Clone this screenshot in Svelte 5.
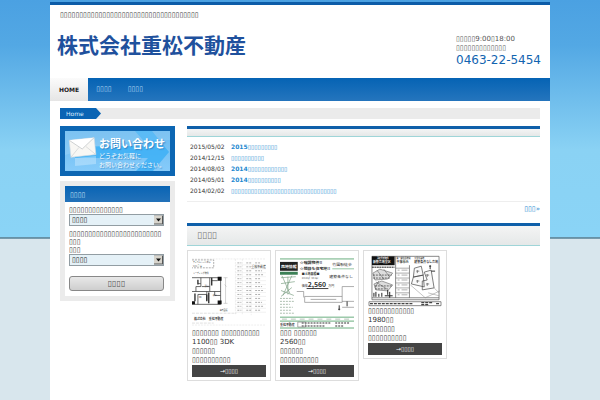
<script>
    const box = (n) => '▯'.repeat(n);

    const nav = [
        { label: 'HOME', active: true },
        { label: box(4) },
        { label: box(4) },
    ];

    const news = [
        { date: '2015/05/02', year: '2015', title: box(9) },
        { date: '2014/12/15', year: '', title: box(10) },
        { date: '2014/08/03', year: '2014', title: box(12) },
        { date: '2014/05/01', year: '2014', title: box(10) },
        { date: '2014/02/02', year: '', title: box(32) },
    ];

    const cards = [
        { art: 'plan', lines: [box(7) + ' ' + box(10), '1100' + box(2) + ' 3DK', box(6), box(10)] },
        { art: 'land', lines: [box(3) + ' ' + box(6), '2560' + box(2), box(6), box(10)] },
        { art: 'lots', lines: [box(12), '1980' + box(2), box(7), box(10)] },
    ];

    const rows = [0, 1, 2, 3, 4, 5, 6, 7, 8, 9, 10, 11, 12];
</script>

<div class="page">
    <header>
        <p class="tagline">{box(36)}</p>
        <div class="brand">
            <h1><a href="#home">株式会社重松不動産</a></h1>
            <div class="contact">
                <p>{box(5)}9:00{box(1)}18:00</p>
                <p>{box(13)}</p>
                <a class="tel" href="tel:0463225454">0463-22-5454</a>
            </div>
        </div>
    </header>

    <nav>
        {#each nav as item}
            <a href="#nav" class:active={item.active}>{item.label}</a>
        {/each}
    </nav>

    <div class="crumbs"><a href="#home">Home</a></div>

    <div class="columns">
        <aside>
            <a class="banner" href="#contact">
                <svg class="sky" viewBox="0 0 105 40" preserveAspectRatio="none" aria-hidden="true">
                    <path d="M70 0H87L104 21L88 40H71L83 27H10V15H83Z" fill="#35adf5" opacity=".75" />
                    <path d="M0 0H105V9Q50 9 0 24Z" fill="#fff" opacity=".13" />
                    <path d="M10 27L31 25V33L10 35Z" fill="#d9efff" opacity=".4" />
                    <g transform="rotate(-6 17 16)">
                        <rect x="5" y="8" width="25" height="17" fill="#f8f7f4" stroke="#d5dce0" stroke-width=".6" />
                        <path d="M5 25L14 16M30 25L21 16" stroke="#d2d4d4" stroke-width=".7" />
                        <path d="M5 8L17 18L30 8" fill="#fff" stroke="#c5c9ca" stroke-width=".8" />
                    </g>
                </svg>
                <span class="banner-text">
                    <strong>お問い合わせ</strong>
                    <span>どうぞお気軽に</span>
                    <span>お問い合わせください。</span>
                </span>
            </a>

            <form class="search">
                <h2>{box(4)}</h2>
                <div class="fields">
                    <label for="kind">{box(14)}</label>
                    <div class="select">
                        <select id="kind"><option>{box(4)}</option></select>
                        <svg viewBox="0 0 9 9" aria-hidden="true">
                            <path d="M0 0H9V9H0Z" fill="#565656" /><path d="M0 0H8V8H0Z" fill="#d7d4cc" />
                            <path d="M2 3H7L4.500 6Z" fill="#111" />
                        </svg>
                    </div>
                    <label class="second" for="area">{box(24)}<br />{box(3)}<br />{box(3)}</label>
                    <div class="select">
                        <select id="area"><option>{box(4)}</option></select>
                        <svg viewBox="0 0 9 9" aria-hidden="true">
                            <path d="M0 0H9V9H0Z" fill="#565656" /><path d="M0 0H8V8H0Z" fill="#d7d4cc" />
                            <path d="M2 3H7L4.500 6Z" fill="#111" />
                        </svg>
                    </div>
                    <button type="button">{box(4)}</button>
                </div>
            </form>
        </aside>

        <main>
            <div class="bar"></div>
            <ul class="news">
                {#each news as item}
                    <li><time>{item.date}</time><a href="#news"><b>{item.year}</b>{item.title}</a></li>
                {/each}
            </ul>
            <a class="more" href="#more">{box(3)}»</a>

            <h2 class="bar title">{box(4)}</h2>
            <div class="cards">
                {#each cards as card}
                    <article>
                        {#if card.art === 'plan'}
                            <svg class="flyer" viewBox="0 0 75 73" aria-hidden="true">
                                <path d="M0 3H75M0 70H75M44 3V60M51 3V60M60 23V60" stroke="#ddd" stroke-width=".5" stroke-dasharray="2 1" />
                                <path d="M0 4H22V12H0" fill="none" stroke="#777" stroke-width=".6" stroke-dasharray="2 1" />
                                <text x="1" y="7" class="t2">ディベルハイム平塚</text>
                                <text x="1" y="11" class="t2">5 0 1 号 室</text>
                                <text x="1" y="18" class="t2">リーディング物件</text>
                                {#each rows as i}
                                    <path d="M44 {i * 4 + 9}H75" stroke="#ddd" stroke-width=".4" />
                                    <path d="M46 {i * 4 + 7}h4m5 0h5m4 0h{(i % 4) + 5}" stroke="#999" stroke-width=".8" stroke-dasharray="2 1" />
                                {/each}
                                <text x="60" y="12" class="t3">重松不動産</text>
                                <path d="M0 22H29V49H0M0 36H29M18 22V36M9 22V28H6M4 36V31H9V28M15 36V45M6 39V49M6 39H15M23 36V40H29M10 31H18M20 25H26" fill="none" stroke="#444" stroke-width=".8" />
                                <path d="M6 24V29M3 38V46M15 39V46M20 22V30M17 37V48" stroke="#222" stroke-width="1.300" />
                                <path d="M26 21h4v4h-4zM26 45h4v4h-4zM0 46h3v3H0z" fill="#111" />
                                <path d="M34 22V48M32 22H36M32 48H36M33 29L35 31" stroke="#aaa" stroke-width=".5" />
                                <text x="13" y="31" class="t2">洋室</text><text x="21" y="41" class="t2">和室</text>
                                <text x="7" y="43" class="t2">DK</text><text x="28" y="56" class="t2">専有面積</text>
                                <path d="M0 58H45M0 68H22" stroke="#ccc" stroke-width=".6" stroke-dasharray="3 1" />
                                <text x="2" y="65" class="t3 strong">株式会社　重松不動産</text>
                            </svg>
                        {:else if card.art === 'land'}
                            <svg class="flyer" viewBox="0 0 75 73" aria-hidden="true">
                                <path d="M0 3H75" stroke="#69ad7d" />
                                <path d="M0 6H18V15H0Z" fill="#222" /><path d="M0 16H18V19H0Z" fill="#3c8157" />
                                <text x="1" y="12" class="t4 white">売地情報</text>
                                <text x="20" y="8" class="t4 strong">☆強調物件!!</text>
                                <text x="20" y="14" class="t4 strong">☆閑静な住宅地!!</text>
                                <text x="53" y="10" class="t4">竹園駅徒歩</text>
                                <path d="M53 13H75" stroke="#69ad7d" stroke-width=".7" />
                                <text x="22" y="19" class="t3 strong">■土地面積■</text>
                                <text x="22" y="23" class="t2">165.63㎡（50.1坪）</text>
                                <text x="50" y="22" class="t4">建築条件なし</text>
                                <text x="22" y="31" class="t3">価格</text><text x="28" y="31" class="price">2,560</text><text x="49" y="31" class="t3">万円</text>
                                <path d="M27 33H49" stroke="#111" stroke-width=".8" />
                                <path d="M1 22L16 21M1 28L15 26M2 20L10 38M12 20L3 40M1 35L14 40M1 41L12 32M8 21V39" stroke="#7da085" stroke-width=".7" fill="none" />
                                <path d="M0 43H13M0 46H14M0 49H10M0 52H13M0 55H11M0 58H14" stroke="#89a38d" stroke-width=".7" stroke-dasharray="2 1" />
                                <path d="M17 36H24V42M25 41H63V47H25ZM63 41V31H75M63 46H75M63 52H75M31 44H57" fill="none" stroke="#777" stroke-width=".6" />
                                <path d="M60 50V55M59 54H61M68 46V51" stroke="#333" />
                                <path d="M0 62H75M0 66H75M0 73H75" stroke="#69ad7d" />
                                <path d="M2 64H73" stroke="#96a99b" stroke-dasharray="5 4" stroke-width=".7" />
                                <text x="0" y="71" class="t3 strong">重松不動産</text>
                                <path d="M22 68H52M22 71H45M56 68H70M56 71H65" stroke="#777" stroke-width="1.500" stroke-dasharray="2 1" />
                                <path d="M18 67h8v5h-8z" fill="none" stroke="#777" stroke-width=".6" />
                            </svg>
                        {:else}
                            <svg class="flyer short" viewBox="0 0 75 52" aria-hidden="true">
                                <path d="M4 1H72V45H4ZM1 47H74V51H1ZM28 1V43M42 10V43M4 43H72" fill="none" stroke="#555" stroke-width=".7" />
                                <path d="M4 1H27V10H4Z" fill="#111" />
                                <text x="9" y="4" class="t2 white">当社管理物件</text><text x="5" y="8" class="t3 white">新築売地全区</text>
                                <path d="M4 12H27" stroke="#222" stroke-dasharray="2 .500" />
                                <text x="29" y="4" class="t2 strong">第一種住居地域</text><text x="29" y="8" class="t3 strong">平塚市内</text>
                                <text x="47" y="4" class="t2 strong">大型分譲地</text><text x="47" y="8" class="t3 strong">建築条件なし売地</text>
                                <path d="M5 18L12 14L25 18L20 24L7 25ZM6 29L14 26L25 30L20 36L8 35ZM9 15L16 24M16 14L22 22M8 27L19 34M11 26L7 33" fill="#ddd" stroke="#666" stroke-width=".6" />
                                <path d="M5 20H24M5 23H22M7 31H24M7 34H20" stroke="#333" stroke-width=".7" stroke-dasharray="2 1" />
                                <path d="M6 38V42M8 37V42M11 39V42M14 38V42M20 35V40M22 37V43M17 41H25" stroke="#222" />
                                {#each rows.slice(0, 6) as i}
                                    <path d="M28 {i * 5 + 13}H42M30 {i * 5 + 15}h2m2 0h6" stroke="#888" stroke-width=".7" />
                                {/each}
                                <path d="M47 13L54 11L56 20L46 22ZM46 22L56 20L57 32L44 29ZM57 17L64 15L67 33L55 35L55 26L60 25Z" fill="#fafafa" stroke="#444" stroke-width=".7" />
                                <path d="M43 30L58 43L73 36M67 33L72 38M61 38L72 41" fill="none" stroke="#888" stroke-width=".5" />
                                <path d="M50 15V18M49 16H52M50 25V28M49 26H52M60 28V31M59 29H62M60 19V22M59 20H62" stroke="#555" stroke-width=".7" />
                                <path d="M63 10V14M62 11H64M64 16H68" stroke="#333" />
                                <path d="M2 49H45M54 48H65M54 50H62M69 49H73" stroke="#444" stroke-width="1.200" stroke-dasharray="3 1" />
                            </svg>
                        {/if}
                        {#each card.lines as line}
                            <p>{line}</p>
                        {/each}
                        <a href="#detail">→{box(4)}</a>
                    </article>
                {/each}
            </div>
        </main>
    </div>
</div>

<style>
    :global(body) {
        margin: 0;
        background:
            linear-gradient(#4ba1e2 0, #53a8e4 45px, #8ad2f4 150px, #8ad4f6 237px, #5d8da5 237px, #7f9fae 239px, #d8e6ed 239px);
        font-family: "DejaVu Sans", "Noto Sans CJK JP", sans-serif;
        font-size: 7px;
        color: #333;
    }

    h1, h2, p, ul {
        margin: 0;
        padding: 0;
    }

    a {
        text-decoration: none;
    }

    .page {
        box-sizing: border-box;
        max-width: 500px;
        min-height: calc(100vh - 2px);
        margin: 2px auto 0;
        border-top: 3px solid #0d5ca8;
        background: #fff;
    }

    header {
        box-sizing: border-box;
        min-height: 73px;
        padding: 6px 10px 0;
    }

    .tagline {
        line-height: 9px;
    }

    .brand {
        display: flex;
        justify-content: space-between;
        padding-top: 10px;
    }

    h1 {
        margin: 2px 0 0 -3px;
        font: bold 21px/24px "Noto Sans CJK JP", sans-serif;
    }

    h1 a {
        color: #1f519d;
    }

    .contact {
        width: 84px;
        padding-top: 5px;
        line-height: 9px;
        white-space: nowrap;
        color: #555;
    }

    .tel {
        font-size: 12px;
        line-height: 14px;
        color: #1264b0;
    }

    nav {
        display: flex;
        background: linear-gradient(#0563b4, #2575bd);
        line-height: 23px;
    }

    nav a {
        padding: 0 8px;
        color: #b4d8f5;
    }

    nav a.active {
        padding: 0 9px;
        background: linear-gradient(#fbfbfb, #e5e5e5);
        font-size: 6px;
        font-weight: bold;
        color: #222;
    }

    .crumbs {
        display: flex;
        margin: 7px 10px;
        background: #ebebeb;
        line-height: 11px;
    }

    .crumbs a {
        width: 35px;
        padding-left: 6px;
        background: #0964b4;
        clip-path: polygon(0 0, 36px 0, 100% 50%, 36px 100%, 0 100%);
        font-size: 6px;
        color: #d7ecff;
    }

    .columns {
        display: grid;
        grid-template-columns: 115px 1fr;
        gap: 12px;
        padding: 0 10px;
    }

    .banner {
        display: block;
        position: relative;
        height: 40px;
        border: 5px solid #0c66b3;
        background: linear-gradient(#69baf0, #86cbfa);
        color: #fff;
    }

    .sky {
        position: absolute;
        width: 100%;
        height: 100%;
    }

    .banner-text {
        display: flex;
        position: relative;
        flex-direction: column;
        padding: 4px 0 0 34px;
        font: 6px/9px "Noto Sans CJK JP", sans-serif;
        white-space: nowrap;
        text-shadow: 1px 1px 1px #3788c5;
    }

    .banner-text strong {
        font-size: 11px;
        line-height: 16px;
    }

    .search {
        margin-top: 5px;
        border: 5px solid #ebebeb;
    }

    .search h2 {
        padding: 2px 5px 0;
        background: linear-gradient(#0964b4, #2472b9);
        font-size: 7px;
        font-weight: normal;
        line-height: 14px;
        color: #c3e0f5;
    }

    .fields {
        padding: 4px 4px 5px;
    }

    label {
        display: block;
        line-height: 8px;
        white-space: nowrap;
    }

    label.second {
        margin-top: 4px;
    }

    .select {
        position: relative;
        width: 95px;
    }

    select {
        display: block;
        appearance: none;
        box-sizing: border-box;
        width: 100%;
        height: 12px;
        padding: 0 2px;
        border: 1px solid #929da3;
        border-radius: 0;
        background: #e5f1f7;
        font: 7px/10px "DejaVu Sans", sans-serif;
        color: #111;
    }

    .select svg {
        position: absolute;
        top: 1px;
        right: 1px;
        width: 9px;
        height: 10px;
        pointer-events: none;
    }

    button {
        display: block;
        width: 95px;
        height: 15px;
        margin-top: 10px;
        padding: 0;
        border: 1px solid #888;
        border-radius: 3px;
        background: linear-gradient(#e8e8e8, #cecece);
        font: 8px/13px "DejaVu Sans", sans-serif;
        color: #555;
    }

    .bar {
        box-sizing: border-box;
        min-height: 11px;
        border-top: 3px solid #0e5fa9;
        border-bottom: 1px solid #9fd5d8;
        background: linear-gradient(#f4f4f4, #e5e8e8);
    }

    .title {
        padding-left: 10px;
        font-size: 9px;
        font-weight: normal;
        line-height: 19px;
        color: #777;
    }

    .news {
        padding: 4px 3px 5px;
        border-bottom: 1px solid #eee;
        list-style: none;
        font-size: 6px;
        line-height: 11px;
    }

    .news li {
        display: flex;
        gap: 5px;
    }

    .news time {
        width: 36px;
    }

    .news a, .more {
        color: #2388d0;
    }

    .more {
        display: block;
        margin: 3px 0 9px;
        line-height: 9px;
        text-align: right;
    }

    .cards {
        display: flex;
        align-items: flex-start;
        gap: 4px;
        padding-top: 4px;
    }

    article {
        box-sizing: border-box;
        width: 84px;
        padding: 4px 4px 3px;
        border: 1px solid #ddd;
        line-height: 9px;
        white-space: nowrap;
    }

    article a {
        display: block;
        background: #444;
        font-size: 6px;
        line-height: 12px;
        text-align: center;
        color: #fff;
    }

    .flyer {
        display: block;
        width: 100%;
        height: 74px;
    }

    .short {
        height: 52px;
    }

    .flyer text {
        font-family: "Noto Sans CJK JP", sans-serif;
        fill: #333;
    }

    .flyer .t2 {
        font-size: 2px;
    }

    .flyer .t3 {
        font-size: 3px;
    }

    .flyer .t4 {
        font-size: 4px;
    }

    .flyer .strong {
        font-weight: bold;
    }

    .flyer .white {
        font-weight: bold;
        fill: #fff;
    }

    .flyer .price {
        font-size: 7px;
        font-weight: bold;
    }
</style>
